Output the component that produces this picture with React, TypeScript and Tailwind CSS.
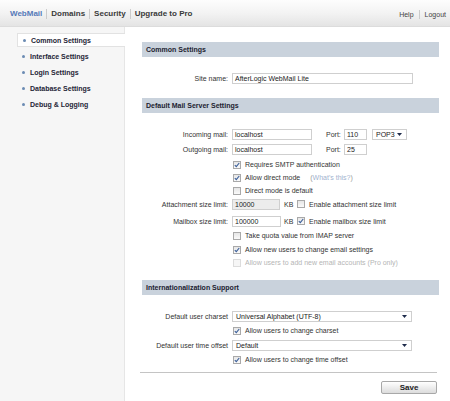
import React from "react";

const Check = ({ checked = false, disabled = false }: { checked?: boolean; disabled?: boolean }) => (
  <span
    className={`inline-flex w-[8px] h-[8px] shrink-0 items-center justify-center border ${
      disabled ? "border-[#dcdcdc] bg-[#f6f6f6]" : "border-[#a9a9a9] bg-gradient-to-b from-[#e6e6e6] to-[#fafafa]"
    }`}
  >
    {checked && (
      <svg width="6" height="6" viewBox="0 0 6 6">
        <path d="M0.8 3.1 L2.3 4.7 L5.2 1" fill="none" stroke="#3b5f9a" strokeWidth="1.1" />
      </svg>
    )}
  </span>
);

const Label = ({ children }: { children?: React.ReactNode }) => (
  <div className="w-[90px] shrink-0 pr-[4px] text-right text-[#333]">{children}</div>
);

const Input = ({ value, w, gray = false }: { value: string; w: string; gray?: boolean }) => (
  <div
    className={`${w} h-[11px] border border-[#cfcfcf] ${gray ? "bg-[#ececec]" : "bg-white"} pl-[2px] leading-[9px] text-[#222]`}
  >
    {value}
  </div>
);

const Select = ({ value, w }: { value: string; w: string }) => (
  <div className={`${w} h-[11px] border border-[#cfcfcf] bg-white pl-[3px] pr-[4px] flex items-center justify-between text-[#222]`}>
    <span className="leading-[9px]">{value}</span>
    <svg width="5" height="3" viewBox="0 0 5 3">
      <path d="M0 0 L5 0 L2.5 3 Z" fill="#1d2a4a" />
    </svg>
  </div>
);

const CheckRow = ({
  label,
  checked,
  disabled,
  extra,
  mt,
}: {
  label: string;
  checked?: boolean;
  disabled?: boolean;
  extra?: React.ReactNode;
  mt: string;
}) => (
  <div className={`flex items-center h-[13px] ${mt}`}>
    <div className="w-[91px] shrink-0" />
    <Check checked={checked} disabled={disabled} />
    <span className={`ml-[4px] ${disabled ? "text-[#b5b5b5]" : "text-[#333]"}`}>{label}</span>
    {extra}
  </div>
);

const SectionHeader = ({ title, mt }: { title: string; mt: string }) => (
  <div className={`h-[15px] bg-[#c9d2dc] flex items-center pl-[4px] font-bold text-[#1c2230] ${mt}`}>{title}</div>
);

export default function App() {
  const nav = ["WebMail", "Domains", "Security", "Upgrade to Pro"];
  const side = ["Common Settings", "Interface Settings", "Login Settings", "Database Settings", "Debug & Logging"];
  return (
    <div
      className="w-[450px] h-[401px] overflow-hidden bg-white flex flex-col text-[7px] leading-none"
      style={{ fontFamily: '"Liberation Sans", Arial, sans-serif' }}
    >
      <div className="h-[27px] shrink-0 bg-gradient-to-b from-[#fdfdfd] via-[#f3f3f3] to-[#e4e4e4] border-b border-[#dcdcdc] flex items-center justify-between pl-[10px] pr-[4px]">
        <div className="flex items-center text-[8px] font-bold text-[#3a3a3a] pt-[2px]">
          {nav.map((n, i) => (
            <React.Fragment key={n}>
              {i > 0 && <span className="w-px h-[10px] bg-[#cccccc] mx-[4px]" />}
              <span className={i === 0 ? "text-[#5579b8]" : ""}>{n}</span>
            </React.Fragment>
          ))}
        </div>
        <div className="flex items-center text-[#444] pt-[2px]">
          <span>Help</span>
          <span className="w-px h-[9px] bg-[#cccccc] mx-[5px]" />
          <span>Logout</span>
        </div>
      </div>
      <div className="flex flex-1">
        <div className="w-[125px] shrink-0 bg-[#f6f6f6] border-r border-[#e6e6e6] pt-[6px] pl-[17px] flex flex-col gap-[2px]">
          {side.map((s, i) => (
            <div
              key={s}
              className={`h-[14px] flex items-center pl-[5px] font-bold text-[#1e2536] ${
                i === 0 ? "bg-white border-y border-l border-[#e2e2e2] -mr-px" : ""
              }`}
            >
              <span className="w-[3px] h-[3px] rounded-full bg-[#6b8bb3] mr-[5px]" />
              {s}
            </div>
          ))}
        </div>
        <div className="flex-1 pl-[17px] pr-[11px] pt-[15px] flex flex-col">
          <SectionHeader title="Common Settings" mt="mt-0" />
          <div className="flex items-center h-[14px] mt-[14px]">
            <Label>Site name:</Label>
            <Input value="AfterLogic WebMail Lite" w="w-[181px]" />
          </div>
          <SectionHeader title="Default Mail Server Settings" mt="mt-[13px]" />
          <div className="flex items-center h-[14px] mt-[14px]">
            <Label>Incoming mail:</Label>
            <Input value="localhost" w="w-[80px]" />
            <span className="ml-[14px] w-[18px] text-[#333]">Port:</span>
            <Input value="110" w="w-[23px]" />
            <div className="ml-[5px]">
              <Select value="POP3" w="w-[35px]" />
            </div>
          </div>
          <div className="flex items-center h-[14px] mt-[1px]">
            <Label>Outgoing mail:</Label>
            <Input value="localhost" w="w-[80px]" />
            <span className="ml-[14px] w-[18px] text-[#333]">Port:</span>
            <Input value="25" w="w-[23px]" />
          </div>
          <CheckRow label="Requires SMTP authentication" checked mt="mt-[2px]" />
          <CheckRow
            label="Allow direct mode"
            checked
            mt="mt-0"
            extra={<span className="ml-[10px] text-[#999]">(<span className="text-[#9fb3cf]">What's this?</span>)</span>}
          />
          <CheckRow label="Direct mode is default" mt="mt-0" />
          <div className="flex items-center h-[14px] mt-[0px]">
            <Label>Attachment size limit:</Label>
            <Input value="10000" w="w-[48px]" gray />
            <span className="ml-[4px] w-[13px] text-[#333]">KB</span>
            <Check />
            <span className="ml-[4px] text-[#333]">Enable attachment size limit</span>
          </div>
          <div className="flex items-center h-[14px] mt-[3px]">
            <Label>Mailbox size limit:</Label>
            <Input value="100000" w="w-[49px]" />
            <span className="ml-[3px] w-[13px] text-[#333]">KB</span>
            <Check checked />
            <span className="ml-[4px] text-[#333]">Enable mailbox size limit</span>
          </div>
          <CheckRow label="Take quota value from IMAP server" mt="mt-[1px]" />
          <CheckRow label="Allow new users to change email settings" checked mt="mt-[1px]" />
          <CheckRow label="Allow users to add new email accounts (Pro only)" disabled mt="mt-0" />
          <SectionHeader title="Internationalization Support" mt="mt-[11px]" />
          <div className="flex items-center h-[14px] mt-[14px]">
            <Label>Default user charset</Label>
            <Select value="Universal Alphabet (UTF-8)" w="w-[180px]" />
          </div>
          <CheckRow label="Allow users to change charset" checked mt="mt-[1px]" />
          <div className="flex items-center h-[14px] mt-[1px]">
            <Label>Default user time offset</Label>
            <Select value="Default" w="w-[180px]" />
          </div>
          <CheckRow label="Allow users to change time offset" checked mt="mt-[1px]" />
          <div className="h-px bg-[#c4c4c4] mt-[6px] -ml-[2px] mr-[2px]" />
          <div className="flex justify-end mt-[8px] mr-[2px]">
            <div className="w-[56px] h-[13px] border border-[#a8a8a8] rounded-[2px] bg-gradient-to-b from-[#ffffff] to-[#dcdcdc] flex items-center justify-center font-bold text-[8px] text-[#222]">
              Save
            </div>
          </div>
        </div>
      </div>
    </div>
  );
}
